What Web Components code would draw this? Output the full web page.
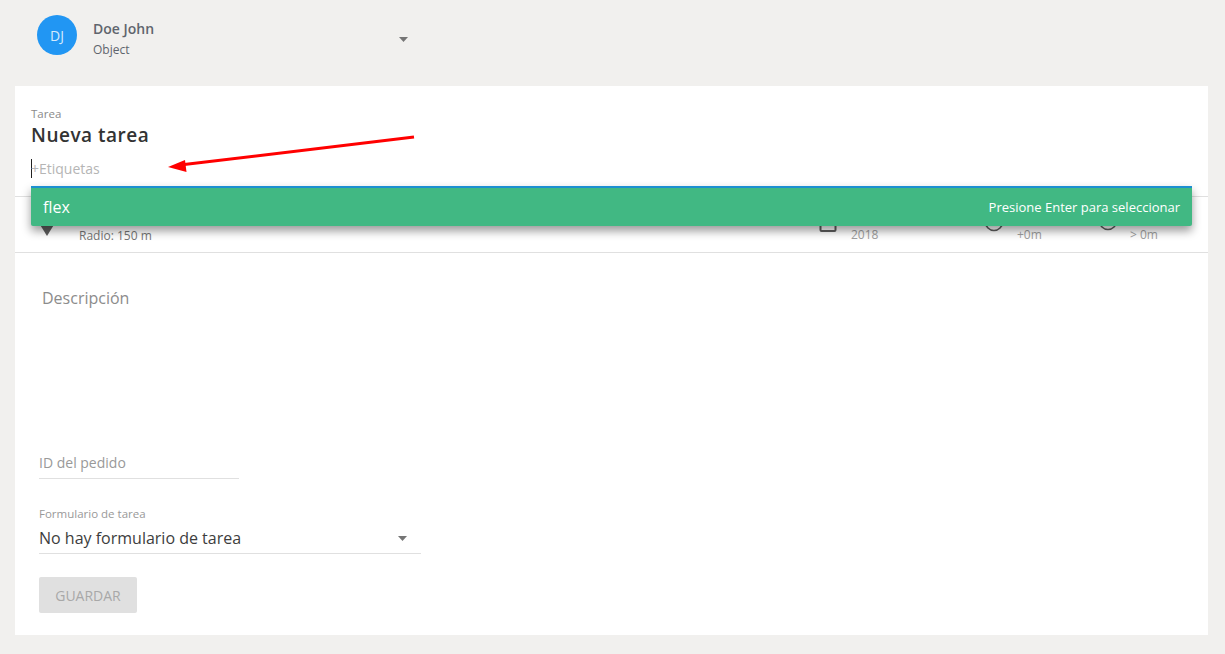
<!DOCTYPE html>
<html lang="es">
<head>
<meta charset="utf-8">
<title>Nueva tarea</title>
<style>
  html, body { margin: 0; height: 100%; }
  body { background: #f1f0ee; font-family: "Open Sans", sans-serif; overflow: hidden; }
</style>
</head>
<body>
<user-header name="Doe John" sub="Object" initials="DJ"></user-header>
<task-card>
  <task-title slot="title" label="Tarea" value="Nueva tarea" placeholder="+Etiquetas"></task-title>
  <tag-suggestion slot="title" text="flex" hint="Presione Enter para seleccionar"></tag-suggestion>
  <arrow-note slot="title"></arrow-note>
  <info-row slot="info"></info-row>
  <task-form slot="form"></task-form>
</task-card>

<script>
const caret = `<svg width="9" height="5" viewBox="0 0 9 5"><path d="M0 0h9L4.5 5z" fill="#757575"/></svg>`;

class UserHeader extends HTMLElement {
  connectedCallback() {
    this.attachShadow({ mode: 'open' });
    this.shadowRoot.innerHTML = `
      <style>
        :host { display: flex; height: 86px; box-sizing: border-box; padding: 15px 0 0 37px; }
        .avatar { width: 40px; height: 40px; border-radius: 50%; background: #2196f3; color: #d5eafc;
          display: flex; align-items: center; justify-content: center; font-size: 14px; }
        .who { margin-left: 16px; width: 306px; color: #5f656d; }
        .name { font-size: 14px; font-weight: 600; line-height: 19px; margin-top: 4px; }
        .sub { font-size: 12px; line-height: 16px; margin-top: 4px; }
        .caret { margin-top: 21px; line-height: 0; }
      </style>
      <div class="avatar">${this.getAttribute('initials')}</div>
      <div class="who">
        <div class="name">${this.getAttribute('name')}</div>
        <div class="sub">${this.getAttribute('sub')}</div>
      </div>
      <div class="caret">${caret}</div>`;
  }
}

class TaskCard extends HTMLElement {
  connectedCallback() {
    this.attachShadow({ mode: 'open' });
    this.shadowRoot.innerHTML = `
      <style>
        :host { display: block; position: relative; margin: 0 17px 0 15px; height: 549px; background: #fff; }
      </style>
      <slot name="title"></slot>
      <slot name="info"></slot>
      <slot name="form"></slot>`;
  }
}

class TaskTitle extends HTMLElement {
  connectedCallback() {
    this.attachShadow({ mode: 'open' });
    this.shadowRoot.innerHTML = `
      <style>
        :host { display: block; height: 111px; box-sizing: border-box; padding: 21px 16px 0; border-bottom: 1px solid #e0e0e0; }
        .label { font-size: 11.5px; line-height: 14px; color: #8a8a8a; }
        .value { font-size: 19px; font-weight: 600; line-height: 26px; margin-top: 1px; color: #333; letter-spacing: .5px; }
        .tags { margin-top: 11px; font-size: 14px; line-height: 19px; color: #b5b5b5; border-left: 1px solid #222; height: 19px; width: max-content; }
        .tags span { margin-left: -1px; }
      </style>
      <div class="label">${this.getAttribute('label')}</div>
      <div class="value">${this.getAttribute('value')}</div>
      <div class="tags"><span>${this.getAttribute('placeholder')}</span></div>`;
  }
}

class TagSuggestion extends HTMLElement {
  connectedCallback() {
    this.attachShadow({ mode: 'open' });
    this.shadowRoot.innerHTML = `
      <style>
        :host { position: absolute; z-index: 5; left: 16px; right: 16px; top: 100px; height: 40px; box-sizing: border-box;
          background: #41b883; border-top: 2px solid #1d8fd1; color: #fff; display: flex; align-items: center;
          justify-content: space-between; padding: 0 12px; border-radius: 0 0 2px 2px;
          box-shadow: 0 5px 10px rgba(0,0,0,.4); }
        .text { font-size: 16px; }
        .hint { font-size: 13px; }
      </style>
      <span class="text">${this.getAttribute('text')}</span>
      <span class="hint">${this.getAttribute('hint')}</span>`;
  }
}

class ArrowNote extends HTMLElement {
  connectedCallback() {
    this.attachShadow({ mode: 'open' });
    this.shadowRoot.innerHTML = `
      <style>
        :host { position: absolute; z-index: 6; left: 150px; top: 46px; line-height: 0; }
      </style>
      <svg width="255" height="42" viewBox="0 0 255 42">
        <path d="M249 5 L15 33" stroke="#ff0000" stroke-width="3" fill="none"/>
        <path d="M3 35 L20 28 L21.5 40z" fill="#ff0000"/>
      </svg>`;
  }
}

class InfoRow extends HTMLElement {
  connectedCallback() {
    this.attachShadow({ mode: 'open' });
    this.shadowRoot.innerHTML = `
      <style>
        :host { display: block; position: relative; height: 56px; box-sizing: border-box; border-bottom: 1px solid #e0e0e0; }
        .item { position: absolute; top: 0; height: 55px; }
        .item svg { position: absolute; }
        .item span { position: absolute; font-size: 12px; line-height: 16px; top: 30px; white-space: nowrap; color: #a0a0a0; }
        .radio span { color: #757575; top: 31px; }
      </style>
      <div class="item radio" style="left:0">
        <svg style="left:24px;top:26px" width="16" height="14" viewBox="0 0 16 14"><path d="M0 0h16L8 13z" fill="#5f5f5f"/></svg>
        <span style="left:64px">Radio: 150 m</span>
      </div>
      <div class="item" style="left:804px">
        <svg style="left:0;top:19px" width="18" height="18" viewBox="0 0 18 18"><rect x="1.5" y="1" width="15" height="14" rx="1" fill="none" stroke="#5f5f5f" stroke-width="2"/></svg>
        <span style="left:32px">2018</span>
      </div>
      <div class="item" style="left:969px">
        <svg style="left:0;top:19px" width="20" height="18" viewBox="0 0 20 18"><circle cx="10" cy="6" r="8.5" fill="none" stroke="#5f5f5f" stroke-width="1.6"/></svg>
        <span style="left:33px">+0m</span>
      </div>
      <div class="item" style="left:1083px">
        <svg style="left:0;top:18px" width="20" height="18" viewBox="0 0 20 18"><circle cx="10" cy="6" r="8.5" fill="none" stroke="#5f5f5f" stroke-width="1.6"/><circle cx="10" cy="6" r="4.5" fill="#5f5f5f"/></svg>
        <span style="left:32px">&gt; 0m</span>
      </div>`;
  }
}

class TaskForm extends HTMLElement {
  connectedCallback() {
    this.attachShadow({ mode: 'open' });
    this.shadowRoot.innerHTML = `
      <style>
        :host { display: block; padding: 33px 24px 0; }
        .desc { font-size: 16px; line-height: 24px; color: #8c8c8c; margin-left: 3px; height: 161px; }
        .order { width: 200px; height: 32px; box-sizing: border-box; border-bottom: 1px solid #e0e0e0; font-size: 14px; line-height: 19px; color: #999; padding-top: 6px; }
        .flabel { font-size: 11.5px; line-height: 16px; color: #999; margin-top: 27px; }
        .select { width: 382px; height: 31px; box-sizing: border-box; border-bottom: 1px solid #e0e0e0; display: flex; justify-content: space-between; align-items: center; font-size: 16px; color: #3d3d3d; padding-right: 14px; margin-top: 1px; }
        .select svg { display: block; }
        button { display: block; margin-top: 23px; width: 98px; height: 36px; border: 0; border-radius: 2px; background: #e0e0e0; color: #a8a8a8; font: 14px "Open Sans", sans-serif; padding: 0; }
      </style>
      <div class="desc">Descripción</div>
      <div class="order">ID del pedido</div>
      <div class="flabel">Formulario de tarea</div>
      <div class="select"><span>No hay formulario de tarea</span>${caret}</div>
      <button disabled>GUARDAR</button>`;
  }
}

customElements.define('user-header', UserHeader);
customElements.define('task-card', TaskCard);
customElements.define('task-title', TaskTitle);
customElements.define('tag-suggestion', TagSuggestion);
customElements.define('arrow-note', ArrowNote);
customElements.define('info-row', InfoRow);
customElements.define('task-form', TaskForm);
</script>
</body>
</html>
